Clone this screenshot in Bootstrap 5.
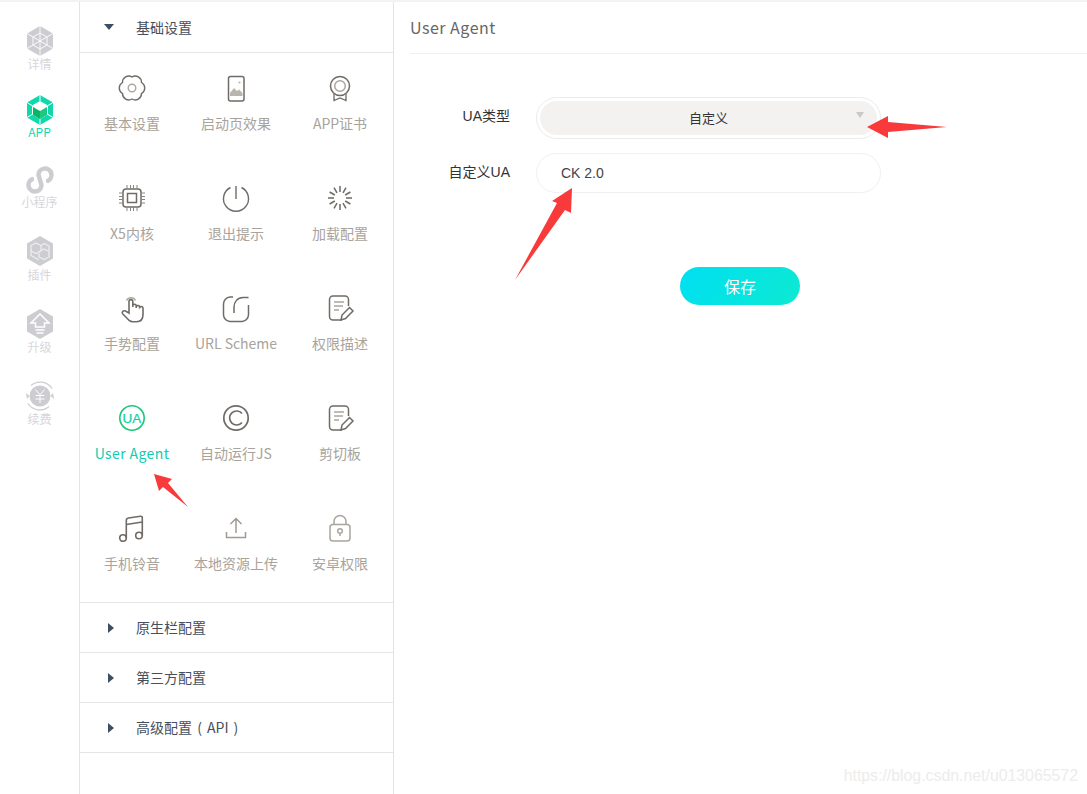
<!DOCTYPE html>
<html lang="zh">

<head>
  <meta charset="UTF-8" />
  <meta name="viewport" content="width=device-width, initial-scale=1" />
  <title>User Agent</title>
  <link href="https://cdn.jsdelivr.net/npm/bootstrap@5.3.0/dist/css/bootstrap.min.css" rel="stylesheet">
  <style>
    body {
      font-family: "Noto Sans CJK SC", "Noto Sans", sans-serif;
      font-size: 14px;
      background-color: #fff;
      overflow: hidden;
    }

    .page-wrap {
      height: 100vh;
      border-top: 2px solid #f3f3f3;
    }

    .side-rail {
      width: 80px;
      padding-top: 24px;
      border-right: 1px solid #e4e4e4;
    }

    .rail-item {
      height: 44px;
      color: #d6d6da;
      font-size: 12px;
      line-height: 14px;
      text-align: center;
    }

    .rail-item svg {
      display: block;
      margin: 0 auto 1px;
    }

    .rail-item:nth-child(2) { margin-top: 25px; color: #10d8b0; }
    .rail-item:nth-child(3) { margin-top: 26px; }
    .rail-item:nth-child(4) { margin-top: 27px; }
    .rail-item:nth-child(5) { margin-top: 29px; }
    .rail-item:nth-child(6) { margin-top: 28px; }
    .rail-item:nth-child(2) svg,
    .rail-item:nth-child(3) svg { margin-bottom: 0; }
    .rail-item:nth-child(4) svg { margin-bottom: 2px; }

    .menu-panel {
      width: 314px;
      border-right: 1px solid #e4e4e4;
    }

    .menu-head {
      height: 50px;
      padding-left: 24px;
      color: #44505f;
      border-bottom: 1px solid #e6e6e6;
    }

    .menu-head-first {
      height: 51px;
    }

    .menu-head-api {
      word-spacing: 2px;
    }

    .menu-caret {
      width: 32px;
    }

    .menu-grid {
      height: 550px;
      border-bottom: 1px solid #e6e6e6;
      padding-right: 1px;
    }

    .menu-cell {
      height: 110px;
      padding-top: 20px;
      color: #a8a39c;
      text-align: center;
      white-space: nowrap;
    }

    .menu-cell svg {
      display: block;
      margin: 0 auto 10px;
    }

    .menu-cell.is-active {
      color: #10cdb0;
      letter-spacing: .4px;
    }

    .main-panel {
      padding-left: 16px;
    }

    .main-title {
      height: 52px;
      padding-bottom: 2px;
      font-size: 16px;
      letter-spacing: .5px;
      color: #666;
      border-bottom: 1px solid #f0f0f0;
    }

    .form-first-row {
      margin-top: 43px;
    }

    .form-next-row {
      margin-top: 14px;
    }

    .form-label-col {
      width: 100px;
      margin-right: 26px;
      font-family: "Liberation Sans", "Noto Sans CJK SC", sans-serif;
      line-height: 39px;
      color: #333;
      text-align: right;
    }

    .ua-select-wrap {
      position: relative;
      width: 345px;
      height: 42px;
      padding: 3px;
      border: 1px solid #ebebeb;
      border-radius: 21px;
    }

    .ua-select-wrap::after {
      content: "";
      position: absolute;
      top: 14px;
      right: 16px;
      border-left: 4px solid transparent;
      border-right: 4px solid transparent;
      border-top: 6px solid #c9c9c9;
    }

    .ua-select {
      width: 100%;
      height: 34px;
      font-size: 13px;
      color: #333;
      border: 0;
      border-radius: 17px;
      background-color: #f3f2f0;
      text-align: center;
      text-align-last: center;
      appearance: none;
      outline: 0;
    }

    .ua-input {
      width: 345px;
      height: 40px;
      padding: 0 0 0 24px;
      font-family: "Liberation Sans", sans-serif;
      font-size: 14px;
      color: #444;
      border: 1px solid #f0f0f0;
      border-radius: 20px;
    }

    .save-btn {
      width: 120px;
      height: 38px;
      margin-left: 270px;
      margin-top: 74px;
      padding: 0;
      font-size: 16px;
      color: #fff;
      border: 0;
      border-radius: 19px;
      background: linear-gradient(120deg, #00dff2, #0ce9d2);
    }

    .mark-layer {
      position: absolute;
      top: 0;
      left: 0;
      pointer-events: none;
    }

    .watermark {
      position: absolute;
      right: 9px;
      bottom: 8px;
      font-family: "Liberation Sans", sans-serif;
      font-size: 15.85px;
      line-height: 20px;
      color: #ececec;
    }
  </style>
</head>

<body>
  <div class="page-wrap d-flex">

    <!-- left rail -->
    <div class="side-rail flex-shrink-0">
      <div class="rail-item">
        <svg width="30" height="30" viewBox="0 0 30 30">
          <path d="M15 0 28 7.5V22.5L15 30 2 22.5V7.5Z" fill="#cdcdd1" />
          <path d="M15 0V30M2 7.5 28 22.5M28 7.5 2 22.5M15 7 22 11V19L15 23 8 19V11Z" fill="none" stroke="#fff" stroke-width=".9" />
        </svg>
        详情
      </div>
      <div class="rail-item">
        <svg width="30" height="30" viewBox="0 0 30 30">
          <path d="M15 0 28 7.5V22.5L15 30 2 22.5V7.5Z" fill="#0fd8ab" />
          <path d="M15 0V6M2 7.5 7 10.5M28 7.5 23 10.5M15 30V24M2 22.5 7 19.5M28 22.5 23 19.5" stroke="#fff" stroke-width="1" />
          <path d="M15 6 23 10.5V19.5L15 24 7 19.5V10.5Z" fill="#fff" />
          <path d="M8 12 15 16V24L8 20Z" fill="#0bb562" />
          <path d="M22 12 15 16V24L22 20Z" fill="#1cc983" />
        </svg>
        APP
      </div>
      <div class="rail-item">
        <svg width="30" height="30" viewBox="0 0 30 30">
          <path d="M7 14.2A6.5 6.5 0 1 0 16.5 20L13.5 10A6.5 6.5 0 1 1 23 15.8" fill="none" stroke="#cdcdd1" stroke-width="4.5" stroke-linecap="round" />
        </svg>
        小程序
      </div>
      <div class="rail-item">
        <svg width="30" height="30" viewBox="0 0 30 30">
          <path d="M15 0 28 7.5V22.5L15 30 2 22.5V7.5Z" fill="#cdcdd1" />
          <path d="M11 7 16 9.5V15L11 17.5 6 15V9.5ZM19 13 24 15.5V21L19 23.5 14 21V15.5ZM16 9.5 19.5 7.5 24 10V15.5M6 15V19.5L14 24" fill="none" stroke="#eeeef0" stroke-width="1.2" />
        </svg>
        插件
      </div>
      <div class="rail-item">
        <svg width="30" height="30" viewBox="0 0 30 30">
          <path d="M15 0 28 7.5V22.5L15 30 2 22.5V7.5Z" fill="#cdcdd1" />
          <path d="M15 5 24 14H19.5V18H10.5V14H6Z" fill="none" stroke="#fff" stroke-width="1.5" />
          <path d="M10.5 21H19.5M11.5 24H18.5" stroke="#fff" stroke-width="1.6" />
        </svg>
        升级
      </div>
      <div class="rail-item">
        <svg width="30" height="30" viewBox="0 0 30 30">
          <circle cx="15" cy="15" r="10.5" fill="#cdcdd1" />
          <path d="M6 4.5A14 14 0 0 1 27 7.5M24 25.5A14 14 0 0 1 3 22.5" fill="none" stroke="#cdcdd1" stroke-width="1.3" />
          <path d="M1 12 2 18 4.5 15ZM29 18 28 12 25.5 15Z" fill="#cdcdd1" />
          <path d="M10.5 8.5 15 14 19.5 8.5M15 14V22M10.5 14.5H19.5M10.5 18H19.5" fill="none" stroke="#fff" stroke-width="1" />
        </svg>
        续费
      </div>
    </div>

    <!-- settings menu -->
    <div class="menu-panel flex-shrink-0">
      <div class="menu-head menu-head-first d-flex align-items-center">
        <span class="menu-caret">
          <svg class="d-block" width="10" height="6" viewBox="0 0 10 6"><path d="M0 0H10L5 6Z" fill="#3f4f63" /></svg>
        </span>
        基础设置
      </div>
      <div class="menu-grid row g-0">
        <div class="col-4 menu-cell">
          <svg width="30" height="30" viewBox="0 0 30 30" fill="none">
            <path d="M15 4A6.3 6.3 0 0 1 24.5 9.500 6.3 6.3 0 0 1 24.5 20.500 6.3 6.3 0 0 1 15 26 6.3 6.3 0 0 1 5.5 20.500 6.3 6.3 0 0 1 5.5 9.500 6.3 6.3 0 0 1 15 4Z" stroke="#6f6b66" stroke-width="1.4" />
            <circle cx="15" cy="15" r="3.8" stroke="#aaa69f" stroke-width="1.4" />
          </svg>
          基本设置
        </div>
        <div class="col-4 menu-cell">
          <svg width="30" height="30" viewBox="0 0 30 30" fill="none">
            <rect x="7.5" y="3.5" width="15.5" height="24.5" rx="2" stroke="#6f6b66" stroke-width="1.5" />
            <path d="M9 23V20L13 15 16 18 18 16.5 21.5 20V23Z" fill="#b9b5ae" />
            <circle cx="18.5" cy="9.5" r="1.1" fill="#b9b5ae" />
          </svg>
          启动页效果
        </div>
        <div class="col-4 menu-cell">
          <svg width="30" height="30" viewBox="0 0 30 30" fill="none">
            <circle cx="15" cy="13" r="9.5" stroke="#6f6b66" stroke-width="1.5" />
            <circle cx="15" cy="13" r="5.3" stroke="#aaa69f" stroke-width="1.5" />
            <path d="M9 21V27.5L15 25 21 27.5V21" stroke="#6f6b66" stroke-width="1.3" />
          </svg>
          APP证书
        </div>

        <div class="col-4 menu-cell">
          <svg width="30" height="30" viewBox="0 0 30 30" fill="none">
            <rect x="6" y="6" width="18" height="18" rx="3" stroke="#6f6b66" stroke-width="1.5" />
            <rect x="10.5" y="10.5" width="9" height="9" stroke="#6f6b66" stroke-width="1.5" />
            <path d="M10 2V6M13.5 2V6M16.5 2V6M20 2V6M10 24V28M13.5 24V28M16.5 24V28M20 24V28M2 10H6M2 13.5H6M2 16.5H6M2 20H6M24 10H28M24 13.5H28M24 16.5H28M24 20H28" stroke="#8a867f" stroke-width="1" />
          </svg>
          X5内核
        </div>
        <div class="col-4 menu-cell">
          <svg width="30" height="30" viewBox="0 0 30 30" fill="none">
            <path d="M9.5 4.5A12.5 12.5 0 1 0 20.5 4.5" stroke="#6f6b66" stroke-width="1.4" />
            <path d="M15 3V16" stroke="#6f6b66" stroke-width="1.4" />
          </svg>
          退出提示
        </div>
        <div class="col-4 menu-cell">
          <svg width="30" height="30" viewBox="0 0 30 30" fill="none" stroke="#6f6b66" stroke-width="1.5">
            <path d="M15 3V9M15 21V27M3 15H9M21 15H27" />
            <path d="M9 4.6 12 9.8M18 20.2 21 25.4M4.6 9 9.8 12M20.2 18 25.4 21M4.6 21 9.8 18M20.2 12 25.4 9M9 25.4 12 20.2M18 9.8 21 4.6" />
          </svg>
          加载配置
        </div>

        <div class="col-4 menu-cell">
          <svg width="30" height="30" viewBox="0 0 30 30" fill="none">
            <path d="M9.5 7.5A5 5 0 0 1 18.5 7.5" stroke="#aaa69f" stroke-width="1.4" />
            <path d="M12 17V8.5A1.9 1.9 0 0 1 15.8 8.5V14M15.8 14V12.8A1.7 1.7 0 0 1 19.2 13V15M19.2 14A1.7 1.7 0 0 1 22.6 14.5V15.5M22.6 15A1.7 1.7 0 0 1 26 15.5V21.5C26 26 23.5 28.8 19.5 28.8H16C14 28.8 12.8 28 11.5 26.8L5.8 21C4.3 19.5 6 17 8.5 18L12 20V17" stroke="#6f6b66" stroke-width="1.6" />
          </svg>
          手势配置
        </div>
        <div class="col-4 menu-cell">
          <svg width="30" height="30" viewBox="0 0 30 30" fill="none" stroke="#6f6b66" stroke-width="1.5">
            <path d="M12 4H9A7 7 0 0 0 2.5 11V22A7 7 0 0 0 9 28.5H21A7 7 0 0 0 27.5 22V12" />
            <path d="M27.5 4.5H22C16.5 4.5 13 9 13 14V20" />
          </svg>
          URL Scheme
        </div>
        <div class="col-4 menu-cell">
          <svg width="30" height="30" viewBox="0 0 30 30" fill="none" stroke="#6f6b66" stroke-width="1.5">
            <path d="M17 27H8A3.5 3.5 0 0 1 4.5 23.5V6.5A3.5 3.5 0 0 1 8 3H20A3.5 3.5 0 0 1 23.5 6.5V13" />
            <path d="M9 9H19M9 13H18M9 17H14" stroke="#aaa69f" />
            <path d="M16 27 17 22 24.5 14.5 28 18 20.5 25.5Z" />
          </svg>
          权限描述
        </div>

        <div class="col-4 menu-cell is-active">
          <svg width="30" height="30" viewBox="0 0 30 30" fill="none">
            <circle cx="15" cy="15" r="12.2" stroke="#1cc77a" stroke-width="1.6" />
            <text x="15" y="19.8" text-anchor="middle" font-size="13.5" fill="#10cfa8" stroke="#10cfa8" stroke-width=".25" letter-spacing="0" font-family="Liberation Sans, sans-serif">UA</text>
          </svg>
          User Agent
        </div>
        <div class="col-4 menu-cell">
          <svg width="30" height="30" viewBox="0 0 30 30" fill="none" stroke="#6f6b66" stroke-width="1.7">
            <circle cx="15" cy="15" r="12.2" />
            <path d="M21 10.5A7 7 0 1 0 21 19.5" />
          </svg>
          自动运行JS
        </div>
        <div class="col-4 menu-cell">
          <svg width="30" height="30" viewBox="0 0 30 30" fill="none" stroke="#6f6b66" stroke-width="1.5">
            <path d="M17 27H8A3.5 3.5 0 0 1 4.5 23.5V6.5A3.5 3.5 0 0 1 8 3H20A3.5 3.5 0 0 1 23.5 6.5V13" />
            <path d="M9 9H19M9 13H18M9 17H14" stroke="#aaa69f" />
            <path d="M16 27 17 22 24.5 14.5 28 18 20.5 25.5Z" />
          </svg>
          剪切板
        </div>

        <div class="col-4 menu-cell">
          <svg width="30" height="30" viewBox="0 0 30 30" fill="none" stroke="#6f6b66" stroke-width="1.6">
            <circle cx="6" cy="25" r="3.3" />
            <circle cx="22" cy="22.5" r="3.3" />
            <path d="M9.3 25V7.5C9.3 6 10 5.3 11.5 5L23.5 3.3C24.8 3.2 25.3 3.8 25.3 5V22.5" />
            <path d="M9.3 11.5 25.3 9" />
          </svg>
          手机铃音
        </div>
        <div class="col-4 menu-cell">
          <svg width="30" height="30" viewBox="0 0 30 30" fill="none" stroke="#a09a92" stroke-width="1.5">
            <path d="M15 20V6M9.5 11 15 5.5 20.5 11" />
            <path d="M5.5 19V24.5H24.5V19" />
          </svg>
          本地资源上传
        </div>
        <div class="col-4 menu-cell">
          <svg width="30" height="30" viewBox="0 0 30 30" fill="none" stroke="#a9a59f" stroke-width="1.5">
            <rect x="5" y="11.5" width="20" height="16.5" rx="3" />
            <path d="M9 11.5V8.5A6 6 0 0 1 21 8.5V11.5" />
            <circle cx="15" cy="18" r="2.3" />
            <path d="M15 20V23" />
          </svg>
          安卓权限
        </div>
      </div>
      <div class="menu-head d-flex align-items-center">
        <span class="menu-caret"><svg class="d-block ms-1" width="6" height="10" viewBox="0 0 6 10"><path d="M0 0 6 5 0 10Z" fill="#3f4f63" /></svg></span>
        原生栏配置
      </div>
      <div class="menu-head d-flex align-items-center">
        <span class="menu-caret"><svg class="d-block ms-1" width="6" height="10" viewBox="0 0 6 10"><path d="M0 0 6 5 0 10Z" fill="#3f4f63" /></svg></span>
        第三方配置
      </div>
      <div class="menu-head menu-head-api d-flex align-items-center">
        <span class="menu-caret"><svg class="d-block ms-1" width="6" height="10" viewBox="0 0 6 10"><path d="M0 0 6 5 0 10Z" fill="#3f4f63" /></svg></span>
        高级配置 ( API )
      </div>
    </div>

    <!-- form -->
    <div class="main-panel flex-grow-1">
      <div class="main-title d-flex align-items-center">User Agent</div>
      <form>
        <div class="d-flex form-first-row">
          <label class="form-label-col">UA类型</label>
          <div class="ua-select-wrap">
            <select class="ua-select">
              <option>自定义</option>
            </select>
          </div>
        </div>
        <div class="d-flex form-next-row">
          <label class="form-label-col">自定义UA</label>
          <input class="ua-input" type="text" value="CK 2.0">
        </div>
        <button type="button" class="btn save-btn d-block">保存</button>
      </form>
    </div>
  </div>

  <!-- red arrows drawn over the screenshot -->
  <svg class="mark-layer" width="1087" height="794" viewBox="0 0 1087 794">
    <path d="M867 127 888 116V122L947 127 888 132V138Z" fill="#f93a3a" />
    <path d="M572 188 571 213 565 210 515 280 557 203 552 201Z" fill="#f93a3a" />
    <path d="M154 474 172 479 168 483 188 507 163 487 159 491Z" fill="#f93a3a" />
  </svg>

  <div class="watermark">https://blog.csdn.net/u013065572</div>

  <script src="https://cdn.jsdelivr.net/npm/bootstrap@5.3.0/dist/js/bootstrap.bundle.min.js"></script>
</body>

</html>
